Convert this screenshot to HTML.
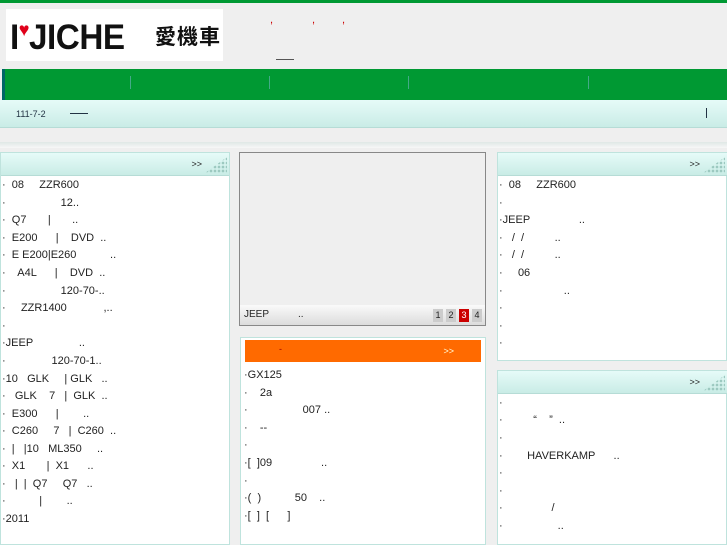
<!DOCTYPE html><html><head><meta charset="utf-8"><style>
*{margin:0;padding:0;box-sizing:border-box}
body{width:727px;height:545px;overflow:hidden;background:#efefef;font-family:"Liberation Sans","Noto Sans CJK TC",sans-serif;font-size:11px;color:#222;position:relative}
.a{position:absolute}
.hd{background:linear-gradient(#e6fbf8,#c9ece6);border-bottom:1px solid #b6dcd6}
.pn{background:#fff;border:1px solid #bfe3dd}
.l{position:absolute;white-space:pre;font-size:11px;line-height:13px}
.dots{position:absolute;right:2px;top:4px;width:22px;height:16px;background:radial-gradient(circle,#9cc9c0 1.2px,transparent 1.5px) 0 0/4px 4px;clip-path:polygon(100% 0,100% 100%,0 100%)}
</style></head><body>
<div class="a" style="left:0;top:0;width:727px;height:3px;background:#009933"></div>
<div class="a" style="left:6px;top:9px;width:217px;height:52px;background:#fff"></div>
<div class="a" style="left:10px;top:10px;font:bold 35px/42px 'Liberation Sans',sans-serif;letter-spacing:-0.5px;color:#111;transform:scaleX(0.95);transform-origin:0 0;white-space:nowrap">I<span style="color:#e0001a;font-size:19px;vertical-align:13px">♥</span>JICHE</div>
<div class="a" style="left:155px;top:23px;font:bold 21px/26px 'Noto Sans CJK TC',sans-serif;color:#111;letter-spacing:1px">愛機車</div>
<div class="a" style="left:270px;top:14px;color:#c00;font-size:11px">,</div>
<div class="a" style="left:312px;top:14px;color:#c00;font-size:11px">,</div>
<div class="a" style="left:342px;top:14px;color:#c00;font-size:11px">,</div>
<div class="a" style="left:276px;top:59px;width:18px;height:1px;background:#555"></div>
<div class="a" style="left:2px;top:69px;width:725px;height:31px;background:#009933;border-left:3px solid #066"></div>
<div class="a" style="left:130px;top:76px;width:1px;height:13px;background:#4a8"></div>
<div class="a" style="left:269px;top:76px;width:1px;height:13px;background:#4a8"></div>
<div class="a" style="left:408px;top:76px;width:1px;height:13px;background:#4a8"></div>
<div class="a" style="left:588px;top:76px;width:1px;height:13px;background:#4a8"></div>
<div class="a hd" style="left:0;top:100px;width:727px;height:28px"></div>
<div class="a" style="left:16px;top:109px;font-size:9px;color:#234">111-7-2</div>
<div class="a" style="left:70px;top:113px;width:18px;height:1px;background:#234"></div>
<div class="a" style="left:706px;top:108px;width:1px;height:10px;background:#234"></div>
<div class="a" style="left:0;top:142px;width:727px;height:6px;background:linear-gradient(#dfe8e6,#f7f7f7)"></div>

<div class="a pn" style="left:0;top:152px;width:230px;height:393px"></div>
<div class="a hd" style="left:1px;top:153px;width:228px;height:23px"><span class="a" style="right:27px;top:6px;font-size:9px">&gt;&gt;</span><div class="dots"></div></div>
<div class="a" style="left:2px;top:179px">
<div class="l" style="top:0">·  08     ZZR600</div>
<div class="l" style="top:18px">·                  12..</div>
<div class="l" style="top:35px">·  Q7       |       ..</div>
<div class="l" style="top:53px">·  E200      |    DVD  ..</div>
<div class="l" style="top:70px">·  E E200|E260           ..</div>
<div class="l" style="top:88px">·    A4L      |    DVD  ..</div>
<div class="l" style="top:106px">·                  120-70-..</div>
<div class="l" style="top:123px">·     ZZR1400            ,..</div>
<div class="l" style="top:141px">·</div>
<div class="l" style="top:158px">·JEEP               ..</div>
<div class="l" style="top:176px">·               120-70-1..</div>
<div class="l" style="top:194px">·10   GLK     | GLK   ..</div>
<div class="l" style="top:211px">·   GLK    7   |  GLK  ..</div>
<div class="l" style="top:229px">·  E300      |        ..</div>
<div class="l" style="top:246px">·  C260     7   |  C260  ..</div>
<div class="l" style="top:264px">·  |   |10   ML350     ..</div>
<div class="l" style="top:281px">·  X1       |  X1      ..</div>
<div class="l" style="top:299px">·   |  |  Q7     Q7   ..</div>
<div class="l" style="top:316px">·           |        ..</div>
<div class="l" style="top:334px">·2011</div>
</div>

<div class="a" style="left:239px;top:152px;width:247px;height:174px;background:#efefef;border:1px solid #888"></div>
<div class="a" style="left:240px;top:305px;width:245px;height:20px;background:linear-gradient(#fafafa,#dcdcdc)"></div>
<div class="a" style="left:244px;top:309px;font-size:10px">JEEP</div>
<div class="a" style="left:298px;top:309px;font-size:10px">..</div>
<div class="a" style="left:433px;top:309px;width:10px;height:13px;background:#ccc;font-size:9px;text-align:center;line-height:13px">1</div>
<div class="a" style="left:446px;top:309px;width:10px;height:13px;background:#ccc;font-size:9px;text-align:center;line-height:13px">2</div>
<div class="a" style="left:459px;top:309px;width:10px;height:13px;background:#c00;color:#fff;font-size:9px;text-align:center;line-height:13px">3</div>
<div class="a" style="left:472px;top:309px;width:10px;height:13px;background:#ccc;font-size:9px;text-align:center;line-height:13px">4</div>

<div class="a pn" style="left:240px;top:337px;width:246px;height:208px"></div>
<div class="a" style="left:245px;top:340px;width:236px;height:22px;background:#ff6a00"><span class="a" style="left:34px;top:4px;color:#900;font-size:9px">-</span><span class="a" style="right:27px;top:6px;font-size:9px;color:#ffd">&gt;&gt;</span></div>
<div class="a" style="left:244px;top:369px">
<div class="l" style="top:0">·GX125</div>
<div class="l" style="top:18px">·    2a</div>
<div class="l" style="top:35px">·                  007 ..</div>
<div class="l" style="top:53px">·    --</div>
<div class="l" style="top:70px">·</div>
<div class="l" style="top:88px">·[  ]09                ..</div>
<div class="l" style="top:106px">·</div>
<div class="l" style="top:123px">·(  )           50    ..</div>
<div class="l" style="top:141px">·[  ]  [      ]</div>
</div>

<div class="a pn" style="left:497px;top:152px;width:230px;height:209px"></div>
<div class="a hd" style="left:498px;top:153px;width:229px;height:23px"><span class="a" style="right:27px;top:6px;font-size:9px">&gt;&gt;</span><div class="dots"></div></div>
<div class="a" style="left:499px;top:179px">
<div class="l" style="top:0">·  08     ZZR600</div>
<div class="l" style="top:18px">·</div>
<div class="l" style="top:35px">·JEEP                ..</div>
<div class="l" style="top:53px">·   /  /          ..</div>
<div class="l" style="top:70px">·   /  /          ..</div>
<div class="l" style="top:88px">·     06</div>
<div class="l" style="top:106px">·                    ..</div>
<div class="l" style="top:123px">·</div>
<div class="l" style="top:141px">·</div>
<div class="l" style="top:158px">·</div>
</div>
<div class="a pn" style="left:497px;top:370px;width:230px;height:175px"></div>
<div class="a hd" style="left:498px;top:371px;width:229px;height:23px"><span class="a" style="right:27px;top:6px;font-size:9px">&gt;&gt;</span><div class="dots"></div></div>
<div class="a" style="left:499px;top:397px">
<div class="l" style="top:0">·</div>
<div class="l" style="top:17px">·          “    ”  ..</div>
<div class="l" style="top:35px">·</div>
<div class="l" style="top:53px">·        HAVERKAMP      ..</div>
<div class="l" style="top:70px">·</div>
<div class="l" style="top:88px">·</div>
<div class="l" style="top:105px">·                /</div>
<div class="l" style="top:123px">·                  ..</div>
</div>
</body></html>
